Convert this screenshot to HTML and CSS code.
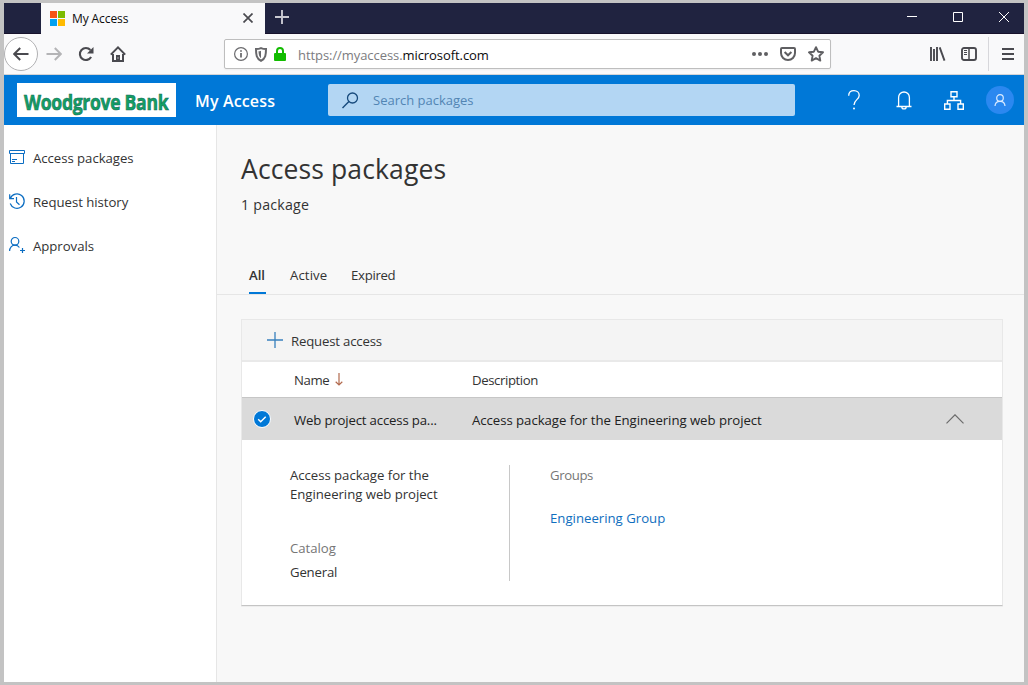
FILE: index.html
```html
<!DOCTYPE html>
<html lang="en">
<head>
<meta charset="utf-8">
<title>My Access</title>
<link rel="stylesheet" href="styles.css">
</head>
<body>
<div class="window">
  <div class="titlebar">
    <div class="tab">
      <svg class="ms-logo" width="15" height="15" viewBox="0 0 15 15"><path fill="#f65314" d="M0 0h7v7H0z"/><path fill="#7cbb00" d="M8 0h7v7H8z"/><path fill="#00a1f1" d="M0 8h7v7H0z"/><path fill="#ffbb00" d="M8 8h7v7H8z"/></svg>
      <span class="tab-title">My Access</span>
      <svg class="tab-close" width="10" height="10" viewBox="0 0 10 10"><path d="M.5.5l9 9M9.500.5L.5 9.500" stroke="#4a4a4f" stroke-width="1.700"/></svg>
    </div>
    <svg class="new-tab" width="14" height="14" viewBox="0 0 14 14"><path d="M7 0v14M0 7h14" stroke="#c9c9d1" stroke-width="1.900"/></svg>
    <div class="win-controls">
      <svg width="10" height="10" viewBox="0 0 10 10"><path d="M0 4.500h10" stroke="#fff"/></svg>
      <svg width="10" height="10" viewBox="0 0 10 10"><path d="M.5.5h9v9h-9z" fill="none" stroke="#fff"/></svg>
      <svg width="10" height="10" viewBox="0 0 10 10"><path d="M0 0l10 10M10 0L0 10" stroke="#fff"/></svg>
    </div>
  </div>

  <div class="toolbar">
    <span class="back"><svg width="16" height="14" viewBox="0 0 16 14"><path d="M15.500 7H1.500M7.200 1L1.200 7l6 6" fill="none" stroke="#4a4a4f" stroke-width="2"/></svg></span>
    <svg class="forward" width="16" height="14" viewBox="0 0 16 14"><path d="M.5 7h14M8.800 1l6 6-6 6" fill="none" stroke="#b4b4b6" stroke-width="2"/></svg>
    <svg class="reload" width="16" height="16" viewBox="0 0 16 16"><path d="M13.100 11A6 6 0 1 1 12.400 4" fill="none" stroke="#4a4a4f" stroke-width="2.100"/><path d="M15.500 1v6.500H9z" fill="#4a4a4f"/></svg>
    <svg class="home" width="16" height="16" viewBox="0 0 16 16"><path d="M.8 8.600L8 1.400l7.200 7.200" fill="none" stroke="#4a4a4f" stroke-width="2"/><path d="M3 8v7h10V8" fill="none" stroke="#4a4a4f" stroke-width="2"/><path d="M6 9h4v6H6z" fill="#4a4a4f"/><path d="M8 11.500v1" stroke="#fff"/></svg>
    <div class="urlbar">
      <svg width="14" height="14" viewBox="0 0 14 14"><circle cx="7" cy="7" r="6.400" fill="none" stroke="#6b6b6e" stroke-width="1.200"/><path d="M7 6v4.500M7 3.200v1.600" stroke="#5b5b5e" stroke-width="1.600"/></svg>
      <svg width="12" height="15" viewBox="0 0 12 15"><path d="M6 1.100c1.700.8 3.200 1 5 1 0 5.600-.4 9.600-5 11.800C1.400 11.700 1 7.700 1 2.100c1.800 0 3.300-.2 5-1z" fill="none" stroke="#67676a" stroke-width="2"/><path d="M6 3.700v7.600C4.200 9.800 3.600 7.600 3.500 4.300c1-.1 1.700-.3 2.500-.6z" fill="#67676a"/></svg>
      <svg width="12" height="14" viewBox="0 0 12 14"><path d="M3 7V4a3 3 0 0 1 6 0v3" fill="none" stroke="#12bc00" stroke-width="2"/><rect y="6" width="12" height="8" rx="1" fill="#12bc00"/></svg>
      <span class="url"><span class="muted">https://myaccess.</span>microsoft.com</span>
      <span class="url-actions">
        <svg width="16" height="4" viewBox="0 0 16 4"><g fill="#5f5f62"><circle cx="2" cy="2" r="2"/><circle cx="8" cy="2" r="2"/><circle cx="14" cy="2" r="2"/></g></svg>
        <svg width="16" height="14" viewBox="0 0 16 14"><path d="M2 1h12q1 0 1 1v4a7 7 0 0 1-14 0V2q0-1 1-1z" fill="none" stroke="#5f5f62" stroke-width="2"/><path d="M4.600 5L8 8.300 11.400 5" fill="none" stroke="#5f5f62" stroke-width="2"/></svg>
        <svg width="16" height="16" viewBox="0 0 16 16"><path d="M8 1.200l2.100 4.500 4.900.6-3.600 3.400.9 4.900L8 12.200l-4.300 2.400.9-4.900L1 6.300l4.900-.6z" fill="none" stroke="#5f5f62" stroke-width="1.900" stroke-linejoin="round"/></svg>
      </span>
    </div>
    <div class="tools">
      <svg width="16" height="14" viewBox="0 0 16 14"><path d="M1 0v14M4 2v12M7 0v14" stroke="#4a4a4f" stroke-width="1.900"/><path d="M9.700.4L14.500 13.600" stroke="#4a4a4f" stroke-width="1.900"/></svg>
      <svg width="16" height="14" viewBox="0 0 16 14"><rect x="1" y="1" width="14" height="12" rx="2" fill="none" stroke="#4a4a4f" stroke-width="1.900"/><path d="M8 1v12" stroke="#4a4a4f" stroke-width="1.500"/><path d="M3 3.500h3M3 5.500h3M3 7.500h3" stroke="#4a4a4f"/></svg>
      <span class="divider"></span>
      <svg width="12" height="12" viewBox="0 0 12 12"><path d="M0 1h12M0 6h12M0 11h12" stroke="#4a4a4f" stroke-width="2"/></svg>
    </div>
  </div>

  <header class="header">
    <div class="brand"><span class="brand-text">Woodgrove Bank</span></div>
    <div class="app-name">My Access</div>
    <div class="search">
      <svg width="17" height="17" viewBox="0 0 17 17"><circle cx="10.500" cy="6" r="5" fill="none" stroke="#174a7c" stroke-width="1.300"/><path d="M6.900 9.600L.5 16" stroke="#174a7c" stroke-width="1.400"/></svg>
      <span class="placeholder">Search packages</span>
    </div>
    <div class="header-icons">
      <svg width="12" height="20" viewBox="0 0 12 20"><path d="M.7 5.800C.7 2.600 3 .7 6 .7s5.200 2 5.200 4.700C11.200 9.600 6 9.800 6 15" fill="none" stroke="#fff" stroke-width="1.300"/><circle cx="6" cy="18.600" r="1" fill="#fff"/></svg>
      <svg width="16" height="19" viewBox="0 0 16 19"><path d="M.5 15.500h15M2.600 15.500V6.400a5.400 5.400 0 0 1 10.800 0v9.100M5.800 15.700a2.200 2.200 0 0 0 4.400 0" fill="none" stroke="#fff" stroke-width="1.300"/></svg>
      <svg width="20" height="19" viewBox="0 0 20 19"><path d="M7 .7h6v5H7zM.7 13H6v5.300H.7zM14 13h5.300v5.300H14zM10 6v3.500M3.400 13V9.500h13.200V13" fill="none" stroke="#fff" stroke-width="1.400"/></svg>
      <span class="avatar"><svg width="12" height="12" viewBox="0 0 12 12"><circle cx="6" cy="4" r="3.300" fill="none" stroke="#dcebff" stroke-width="1.200"/><path d="M1 12c.2-3 2-4.700 5-4.700s4.800 1.700 5 4.700" fill="none" stroke="#dcebff" stroke-width="1.200"/></svg></span>
    </div>
  </header>

  <div class="body">
    <nav class="sidebar">
      <a class="nav-item"><svg width="16" height="16" viewBox="0 0 16 16"><path d="M.5 1.500h15v3H.5zM1.500 4.500v10h13v-10M3 10.500h5M3 12.500h3" fill="none" stroke="#0b6dc2"/></svg><span>Access packages</span></a>
      <a class="nav-item"><svg width="16" height="16" viewBox="0 0 16 16"><path d="M1.400 5.200A7.200 7.200 0 1 1 1.200 10.500M.7 1.300v4.300H5M7.500 4v5l3 2.800" fill="none" stroke="#0b6dc2" stroke-width="1.200"/></svg><span>Request history</span></a>
      <a class="nav-item"><svg width="16" height="16" viewBox="0 0 16 16"><circle cx="6" cy="4.300" r="3.800" fill="none" stroke="#0b6dc2" stroke-width="1.200"/><path d="M.6 14c0-3.400 2.200-5.800 5.400-5.800 2 0 3.500.9 4.400 2.300M13.500 11v5M11 13.500h5" fill="none" stroke="#0b6dc2" stroke-width="1.200"/></svg><span>Approvals</span></a>
    </nav>
    <main class="main">
      <h1 class="title">Access packages</h1>
      <div class="count">1 package</div>
      <div class="tabs">
        <span class="pivot active">All</span><span class="pivot pivot-second">Active</span><span class="pivot pivot-third">Expired</span>
      </div>
      <section class="panel">
        <div class="command">
          <svg width="16" height="16" viewBox="0 0 16 16"><path d="M8 0v16M0 8h16" stroke="#3880bd" stroke-width="1.300"/></svg>
          <span class="request">Request access</span>
        </div>
        <div class="row head">
          <span class="check"></span>
          <span class="name"><span class="tighter">Name</span><svg width="8" height="13" viewBox="0 0 8 13"><path d="M4 0v12M.7 8.800L4 12l3.300-3.200" fill="none" stroke="#b26a4e" stroke-width="1.200"/></svg></span>
          <span class="tighter">Description</span>
        </div>
        <div class="row selected">
          <span class="check"><svg width="18" height="18" viewBox="0 0 18 18"><circle cx="9" cy="9" r="8.500" fill="#0078d7" stroke="#fff"/><path d="M5.200 9.200l2.500 2.500 5-5" fill="none" stroke="#fff" stroke-width="1.400"/></svg></span>
          <span class="cell package">Web project access pa...</span>
          <span class="cell">Access package for the Engineering web project</span>
          <svg class="chevron" width="18" height="10" viewBox="0 0 18 10"><path d="M.5 9.300L9 .8l8.500 8.500" fill="none" stroke="#6b6b6b" stroke-width="1.200"/></svg>
        </div>
        <div class="details">
          <div class="info">
            <p class="summary">Access package for the<br>Engineering web project</p>
            <div class="label">Catalog</div>
            <div class="value">General</div>
          </div>
          <div class="groups">
            <div class="label tighter">Groups</div>
            <a class="link">Engineering Group</a>
          </div>
        </div>
      </section>
    </main>
  </div>
</div>
</body>
</html>
```
FILE: styles.css
```css
* { box-sizing: border-box; }
body {
  margin: 0;
  width: 1028px;
  height: 685px;
  padding: 3px 4px;
  background: #c3c3c3;
  color: #333;
  font: 13.2px/20px "Open Sans", "Noto Sans", sans-serif;
  letter-spacing: -.04px;
  white-space: nowrap;
  overflow: hidden;
}
svg { display: block; flex: none; }
.tighter { letter-spacing: -.4px; }
.window { height: 679px; display: flex; flex-direction: column; background: #f8f8f8; }

.titlebar { height: 31px; background: #202340; border-bottom: 1px solid #17122c; display: flex; align-items: flex-start; padding-left: 37px; }
.tab { width: 224px; height: 31px; background: #f9f9fa; display: flex; align-items: center; padding: 0 12px 0 9px; }
.tab-title { margin-left: 7px; color: #0c0c0d; font-size: 12px; letter-spacing: -.1px; }
.tab-close { margin: 0 0 1px auto; }
.new-tab { margin: 7px 0 0 10px; }
.win-controls { display: flex; gap: 36px; margin: 9px 15px 0 auto; }

.toolbar { height: 41px; border-bottom: 1px solid #d4d4d6; background: #f9f9fa; display: flex; align-items: center; }
.back { width: 34px; height: 34px; border: 1px solid #b1b1b3; border-radius: 50%; background: #fff; display: flex; align-items: center; justify-content: center; }
.forward { margin-left: 8px; }
.reload { margin-left: 16px; }
.home { margin-left: 16px; }
.urlbar { width: 607px; height: 30px; margin-left: 98px; padding: 0 6px 0 9px; background: #fff; border: 1px solid #bebebe; border-radius: 2px; display: flex; align-items: center; gap: 7px; box-shadow: 0 1px 2px #0000000d; }
.url { margin-left: 5px; padding-top: 2px; color: #0c0c0d; font-size: 13px; letter-spacing: -.07px; }
.muted { color: #7c7c80; }
.url-actions { margin-left: auto; display: flex; align-items: center; gap: 12px; }
.tools { margin-left: auto; padding-right: 10px; display: flex; align-items: center; }
.tools svg + svg { margin-left: 15px; }
.divider { width: 1px; height: 34px; background: #d7d7db; margin: 0 13px 0 11px; }

.header { height: 50px; background: #0078d7; display: flex; align-items: center; padding: 0 10px 0 13px; }
.brand { width: 159px; height: 34px; background: #fff; display: flex; align-items: center; justify-content: center; }
.brand-text { color: #12a064; font: 700 22px/30px "Open Sans", sans-serif; letter-spacing: -.4px; -webkit-text-stroke: .6px #176a58; transform: scaleX(.8); padding-top: 1px; }
.app-name { margin-left: 19px; padding-top: 2px; width: 133px; color: #fff; font-size: 16px; font-weight: 600; letter-spacing: .15px; }
.search { width: 467px; height: 32px; padding-left: 14px; background: #b3d6f3; border-radius: 2px; display: flex; align-items: center; }
.placeholder { margin-left: 14px; color: #5285b3; font-size: 13px; letter-spacing: 0; }
.header-icons { margin-left: auto; display: flex; align-items: center; }
.header-icons svg:nth-child(2) { margin-left: 36.5px; }
.header-icons svg:nth-child(3) { margin-left: 31.5px; }
.avatar { width: 28px; height: 28px; margin-left: 22.5px; border-radius: 50%; background: #2b88f0; display: flex; align-items: center; justify-content: center; }

.body { flex: 1; display: flex; }
.sidebar { width: 213px; background: #fff; border-right: 1px solid #e6e6e6; padding: 11px 0 0 5px; }
.nav-item { height: 44px; display: flex; align-items: center; }
.nav-item svg { overflow: visible; margin-bottom: 2px; }
.nav-item span { margin-left: 8px; }
.main { flex: 1; padding-top: 24px; }
.title { margin: 0 0 0 24px; font-size: 26.5px; line-height: 40px; font-weight: 400; letter-spacing: .12px; }
.count { margin: 5px 0 0 24px; font-size: 14.2px; line-height: 22px; letter-spacing: .22px; }
.tabs { height: 42px; margin-top: 37px; padding-left: 32px; border-bottom: 1px solid #e6e6e6; display: flex; }
.pivot { height: 41px; line-height: 44px; margin-right: 24px; }
.active { width: 17px; font-weight: 600; border-bottom: 2px solid #0078d7; }
.pivot-second { width: 37px; letter-spacing: .1px; }
.pivot-third { letter-spacing: -.3px; }

.panel { width: 762px; height: 287px; margin: 24px 0 0 24px; background: #fff; border: 1px solid #e8e8e8; border-bottom-color: #c4c4c4; box-shadow: 0 1px 0 #ededed; }
.command { height: 42px; background: #f4f4f4; border-bottom: 2px solid #e9e9e9; display: flex; align-items: center; padding-left: 25px; }
.request { margin: 2px 0 0 8px; letter-spacing: -.18px; }
.row { display: grid; grid-template-columns: 52px 178px 1fr auto; align-items: center; }
.head { height: 36px; border-bottom: 1px solid #c6c6c6; }
.selected { height: 42px; background: #dadada; color: #212121; }
.check { padding-left: 11px; }
.name { display: flex; align-items: center; gap: 6px; }
.cell { padding-top: 2px; }
.package { letter-spacing: -.17px; }
.chevron { margin-right: 38.5px; }
.details { display: flex; padding: 25px 0 0 48px; }
.info { width: 220px; height: 116px; border-right: 1px solid #c8c8c8; }
.summary { margin: 0; padding-top: 1px; line-height: 19px; }
.label { color: #767676; }
.info .label { margin-top: 34px; }
.value { margin-top: 4px; letter-spacing: -.2px; }
.groups { padding-left: 40px; }
.link { display: block; margin-top: 23px; color: #106ebe; letter-spacing: 0; }
```
